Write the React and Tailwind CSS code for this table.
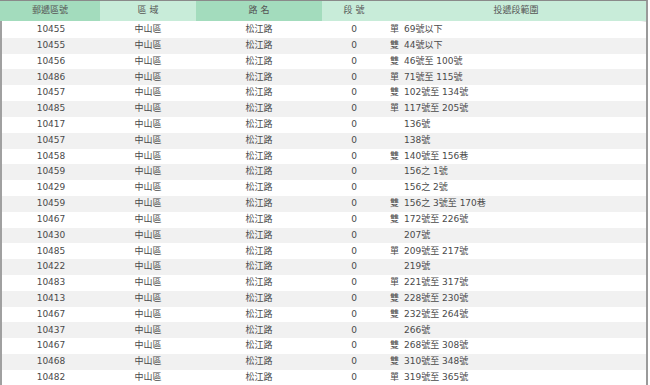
const rows = [
  ["10455", "單", "69號以下"],
  ["10455", "雙", "44號以下"],
  ["10456", "雙", "46號至 100號"],
  ["10486", "單", "71號至 115號"],
  ["10457", "雙", "102號至 134號"],
  ["10485", "單", "117號至 205號"],
  ["10417", "", "136號"],
  ["10457", "", "138號"],
  ["10458", "雙", "140號至 156巷"],
  ["10459", "", "156之 1號"],
  ["10429", "", "156之 2號"],
  ["10459", "雙", "156之 3號至 170巷"],
  ["10467", "雙", "172號至 226號"],
  ["10430", "", "207號"],
  ["10485", "單", "209號至 217號"],
  ["10422", "", "219號"],
  ["10483", "單", "221號至 317號"],
  ["10413", "雙", "228號至 230號"],
  ["10467", "雙", "232號至 264號"],
  ["10437", "", "266號"],
  ["10467", "雙", "268號至 308號"],
  ["10468", "雙", "310號至 348號"],
  ["10482", "單", "319號至 365號"],
];

export default function App() {
  return (
    <div className="w-[650px] h-[385px] overflow-hidden bg-white text-[9px] text-[#4a4a4a] font-['DejaVu_Sans','Noto_Sans_CJK_TC',sans-serif]">
      <div className="w-[648px] border-t border-[#8a8a8a] border-r-2 border-r-[#9a9a9a] shadow-[inset_-5px_0_4px_-3px_#d8d8d8]">
        <div className="flex h-[20px] items-center text-[#555]">
          <div className="w-[100px] h-full flex items-center justify-center bg-[#a3dcbd]">郵遞區號</div>
          <div className="w-[96px] h-full flex items-center justify-center bg-[#c8ecd9]">區 域</div>
          <div className="w-[126px] h-full flex items-center justify-center bg-[#a3dcbd]">路 名</div>
          <div className="w-[64px] h-full flex items-center justify-center bg-[#c8ecd9]">段 號</div>
          <div className="flex-1 h-full flex items-center justify-center bg-[#c8ecd9]">投遞段範圍</div>
        </div>
        <div className="border-l-2 border-l-[#a0a0a0] pt-[1px]">
          {rows.map(([zip, side, range], i) => (
            <div key={i} className={`flex h-[15.82px] items-center ${i % 2 ? "bg-[#f1f1f1]" : "bg-white"}`}>
              <div className="w-[98px] text-center">{zip}</div>
              <div className="w-[96px] text-center">中山區</div>
              <div className="w-[126px] text-center">松江路</div>
              <div className="w-[64px] text-center">0</div>
              <div className="flex-1 pl-[4px] flex">
                <span className="w-[14px]">{side}</span>
                <span>{range}</span>
              </div>
            </div>
          ))}
        </div>
      </div>
    </div>
  );
}
